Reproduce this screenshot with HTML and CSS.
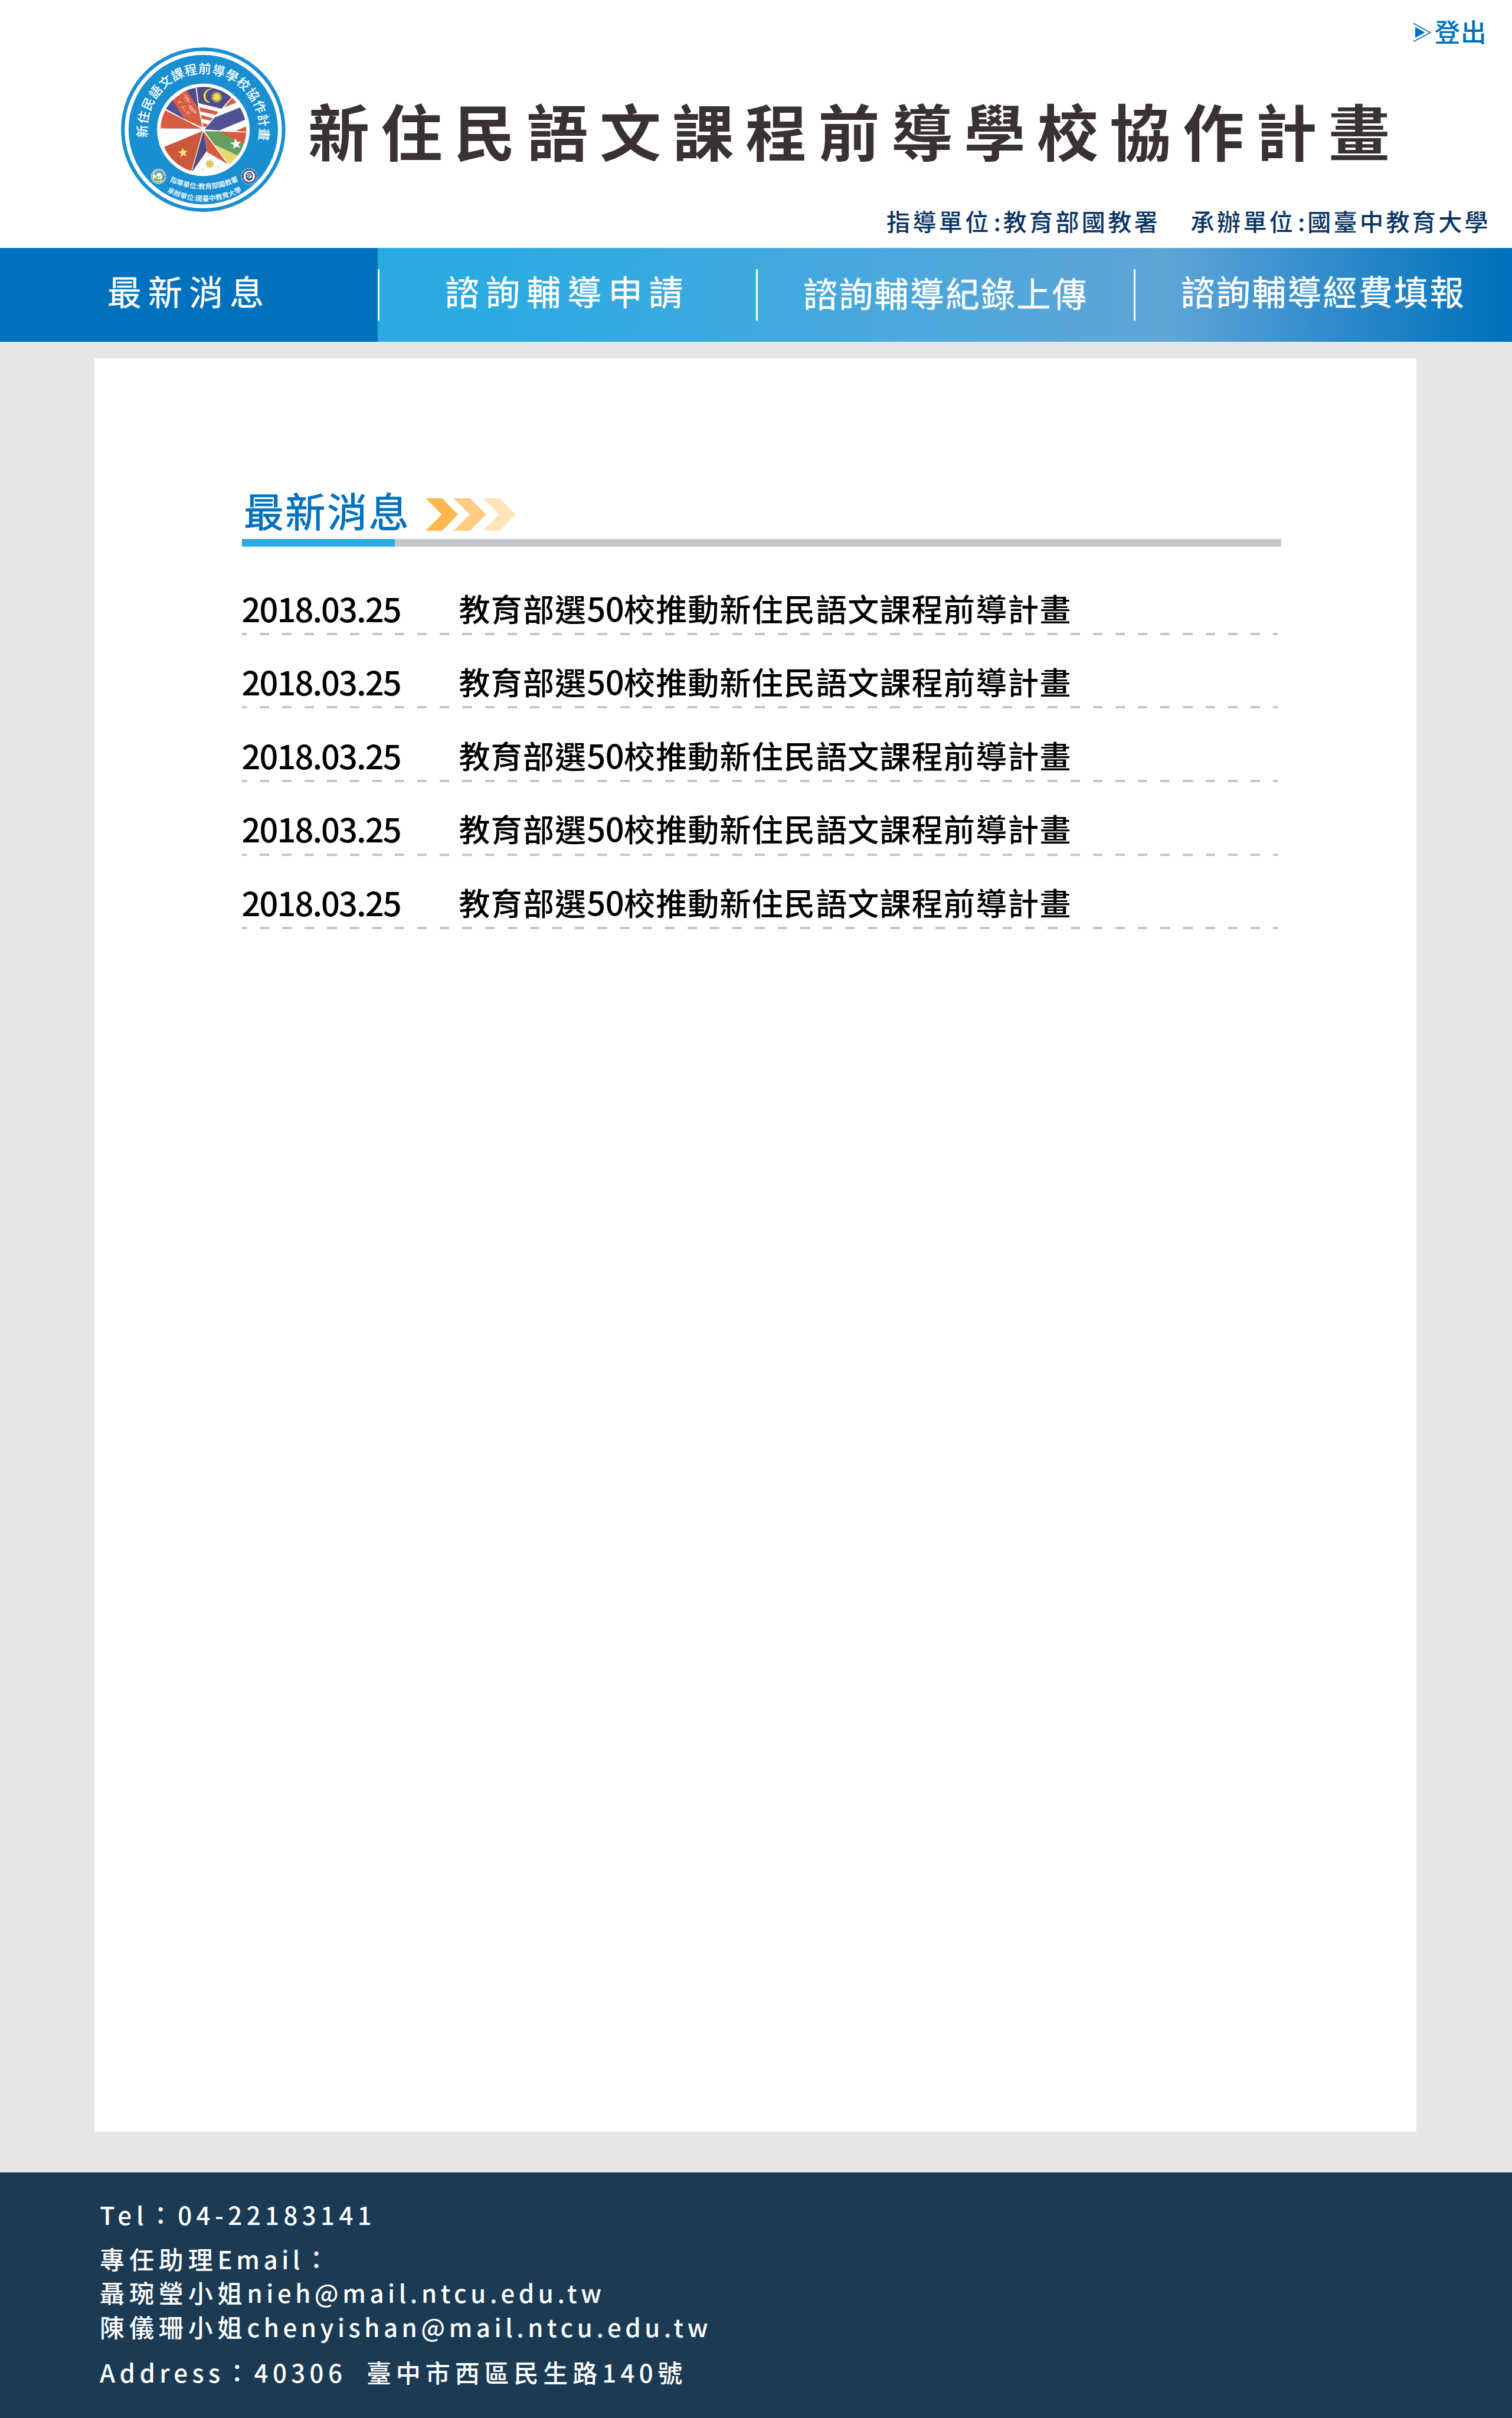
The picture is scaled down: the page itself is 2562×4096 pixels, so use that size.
FILE: index.html
```html
<!DOCTYPE html>
<html lang="zh-Hant">
<head>
<meta charset="utf-8">
<title>新住民語文課程前導學校協作計畫</title>
<link rel="stylesheet" href="styles.css">
</head>
<body>
<header class="header">
  <svg class="logo" viewBox="40 30 1115 1115" role="img" aria-label="新住民語文課程前導學校協作計畫">
    <defs>
      <path id="arc-top" d="M274 774.5A373 373 0 1 1 920 774.5"/>
      <path id="arc-guide" d="M366 925A514 514 0 0 0 838 923"/>
      <path id="arc-host" d="M348 995A511 511 0 0 0 862 990"/>
      <clipPath id="disc"><circle cx="598" cy="589" r="284"/></clipPath>
      <polygon id="star" points="0,-1 .235,-.324 .951,-.309 .38,.124 .588,.809 0,.4 -.588,.809 -.38,.124 -.951,-.309 -.235,-.324"/>
    </defs>
    <circle cx="597" cy="588" r="545" fill="#198fd2"/>
    <circle cx="597" cy="588" r="508" fill="none" stroke="#fff" stroke-width="26"/>
    <circle cx="598" cy="589" r="307" fill="#fff"/>
    <g clip-path="url(#disc)">
      <path fill="#514a86" d="M550 290L800 290V360L782 376 718 450 567 412z"/>
      <path fill="#d75c42" d="M572 439L697 470 680 491 577 467zM582 491L661 512 645 529 586 515zM591 543L630 553 614 571 597 569z"/>
      <path fill="#d75c42" d="M788 378L830 390V404L735 441z"/>
      <path fill="#505294" d="M841 441L890 430V516L705 592 605 587 673 507z"/>
      <path fill="#d75c42" d="M890 563V601L811 597z"/>
      <path fill="#d75c42" d="M702 599L890 607V697L730 617z"/>
      <path fill="#659f5f" d="M606 598L702 599 890 697V792L670 686z"/>
      <path fill="#e5da68" d="M670 686L840 770 775 830z"/>
      <path fill="#534b87" d="M597 600L605 625 622 727 520 872z"/>
      <path fill="#d75c42" d="M601 603L758 816 624 738 619 700z"/>
      <path fill="#c9593a" d="M592 597L330 706 400 880H513z"/>
      <path fill="#d75c42" d="M300 580L330 452 586 582z"/>
      <path fill="#505294" d="M340 445L385 380 397 393 475 520z"/>
      <path fill="#d75c42" d="M394 392L487 320 567 450 590 572 475 519z"/>
      <path fill="#534b87" d="M480 318L544 295 565 447z"/>
      <path fill="#f0df4c" d="M662 318C625 312 599 335 599 368C601 396 622 413 645 410C622 400 612 385 613 363C614 338 632 322 662 318z"/>
      <g stroke="#f0df4c" stroke-width="6"><circle cx="686" cy="372" r="19" fill="#f0df4c"/><path d="M686 336V408M650 372H722M661 347L711 397M711 347L661 397M672 339L700 405M700 339L672 405M653 358L719 386M719 358L653 386"/></g>
      <g fill="none" stroke="#f3b5a4" stroke-width="5"><path d="M470 350L492 396M484 358L504 402M467 378L508 386M474 394L512 408M500 423L552 478M505 433L523 472M517 425L538 474M502 450L552 462M430 398L454 410M430 414L452 402M446 440L482 432M461 436L474 466M481 468L512 482M488 486L505 466M525 468L552 480" stroke-dasharray="12 2"/></g>
    </g>
    <use href="#star" fill="#fff" transform="translate(814 683) rotate(-8) scale(38)"/>
    <use href="#star" fill="#fae67f" transform="translate(463 741) rotate(-7) scale(35)"/>
    <g stroke="#dfc566" stroke-width="9"><circle cx="640" cy="815" r="17" fill="#dfc566"/><path d="M640 785V845M610 815H670M619 794L661 836M661 794L619 836"/></g>
    <g fill="#dfc566"><use href="#star" transform="translate(628 760) scale(9)"/><use href="#star" transform="translate(694 835) scale(9)"/><use href="#star" transform="translate(594 853) scale(9)"/></g>
    <text class="seal-title"><textPath href="#arc-top" startOffset="50.7%">新住民語文課程前導學校協作計畫</textPath></text>
    <text class="seal-line"><textPath href="#arc-guide" startOffset="50%">指導單位:教育部國教署</textPath></text>
    <text class="seal-line"><textPath href="#arc-host" startOffset="50%">承辦單位:國臺中教育大學</textPath></text>
    <circle cx="301" cy="898" r="50" fill="#fff"/>
    <circle cx="301" cy="898" r="43" fill="none" stroke="#55615e" stroke-width="9" stroke-dasharray="6 5"/>
    <path fill="none" stroke="#3c9aa9" stroke-width="12" d="M277 890A27 27 0 0 1 326 880A29 29 0 0 1 320 922"/>
    <path fill="#73b84d" d="M271 907Q288 899 297 918Q320 910 316 928Q292 939 273 923zM286 890Q298 890 298 908Q284 906 286 890zM302 906Q302 894 315 894Q315 906 302 906z"/>
    <circle cx="902" cy="897" r="53" fill="#fff"/>
    <circle cx="902" cy="897" r="44" fill="none" stroke="#2d447c" stroke-width="14" stroke-dasharray="9 2"/>
    <circle cx="902" cy="893" r="21" fill="#fff" stroke="#2d447c" stroke-width="7"/>
    <path fill="none" stroke="#2d447c" stroke-width="6" d="M887 895L908 877M892 906L916 885M880 908Q898 930 925 910M892 924L917 918"/>
  </svg>
  <div class="masthead">
    <a class="logout">
      <svg class="logout-icon" viewBox="0 0 32 34"><path d="M1 1.5L29.5 17.3 1 32.5" fill="none" stroke="#0071bc" stroke-width="1.6"/><path d="M4 7.5L20.5 17 4 26z" fill="#0071bc"/></svg>
      <span>登出</span>
    </a>
    <h1 class="title">新住民語文課程前導學校協作計畫</h1>
    <p class="orgs"><span>指導單位<i class="colon">:</i>教育部國教署</span><span>承辦單位<i class="colon">:</i>國臺中教育大學</span></p>
  </div>
</header>
<nav class="nav">
  <a class="nav-item nav-item--active nav-item--wide">最新消息</a>
  <a class="nav-item nav-item--apply nav-item--wide">諮詢輔導申請</a>
  <a class="nav-item nav-item--upload">諮詢輔導紀錄上傳</a>
  <a class="nav-item nav-item--report">諮詢輔導經費填報</a>
</nav>
<main class="main">
  <section class="panel">
    <div class="section-head">
      <h2 class="section-title">最新消息</h2>
      <svg class="chevrons" viewBox="0 0 153 55"><path fill="#ffb74f" d="M0 0H28L55 27.5 28 55H0L27.500 27.500z"/><path fill="#ffcc85" d="M47.500 0H75.500L102.500 27.500 75.500 55H47.500L75 27.500z"/><path fill="#ffe3b9" d="M97.500 0H125.500L152.500 27.500 125.500 55H97.500L125 27.500z"/></svg>
    </div>
    <div class="rule"></div>
    <ul class="news">
      <li class="news-row"><time class="date">2018.03.25</time><a class="news-title">教育部選<span class="num">50</span>校推動新住民語文課程前導計畫</a></li>
      <li class="news-row"><time class="date">2018.03.25</time><a class="news-title">教育部選<span class="num">50</span>校推動新住民語文課程前導計畫</a></li>
      <li class="news-row"><time class="date">2018.03.25</time><a class="news-title">教育部選<span class="num">50</span>校推動新住民語文課程前導計畫</a></li>
      <li class="news-row"><time class="date">2018.03.25</time><a class="news-title">教育部選<span class="num">50</span>校推動新住民語文課程前導計畫</a></li>
      <li class="news-row"><time class="date">2018.03.25</time><a class="news-title">教育部選<span class="num">50</span>校推動新住民語文課程前導計畫</a></li>
    </ul>
  </section>
</main>
<footer class="footer">
  <p class="tel">Tel：<span class="digits">04-22183141</span></p>
  <p class="mail">專任助理<span class="latin">Email</span>：<br>聶琬瑩小姐<span class="latin">nieh@mail.ntcu.edu.tw</span><br>陳儀珊小姐<span class="latin">chenyishan@mail.ntcu.edu.tw</span></p>
  <p class="address"><span class="digits">Address</span>：<span class="digits">40306&nbsp; </span>臺中市西區民生路<span class="digits">140</span>號</p>
</footer>
</body>
</html>
```
FILE: styles.css
```css
* { box-sizing: border-box; margin: 0; padding: 0; }

body {
  width: 2562px;
  background: #e6e6e6;
  font-family: "Noto Sans CJK TC", "Open Sans", sans-serif;
  color: #000;
}

.header {
  display: flex;
  height: 420px;
  background: #fff;
}
.logo {
  flex: none;
  width: 285px;
  height: 285px;
  margin: 76.700px 0 0 202px;
}
.seal-title { font-size: 84px; font-weight: 500; letter-spacing: 2.500px; text-anchor: middle; fill: #fff; }
.seal-line { font-size: 46px; font-weight: 500; text-anchor: middle; fill: #fff; }

.masthead {
  flex: 1;
  display: flex;
  flex-direction: column;
  padding: 31px 0 0 35px;
}
.logout {
  display: flex;
  align-self: flex-end;
  gap: 5px;
  margin-right: 42.500px;
  color: #0071bc;
  font-size: 43.500px;
  font-weight: 500;
  line-height: 44px;
  letter-spacing: 1px;
}
.logout-icon { width: 32px; height: 34px; margin-top: 7px; }
.title {
  margin-top: 85px;
  color: #3a3232;
  font-size: 104px;
  font-weight: 700;
  line-height: 120px;
  letter-spacing: 19.500px;
  white-space: nowrap;
}
.orgs {
  display: flex;
  justify-content: flex-end;
  gap: 51.500px;
  margin: 69px 36px 0 0;
  color: #0c3564;
  font-size: 40px;
  font-weight: 500;
  line-height: 50px;
  letter-spacing: 4.400px;
}
.colon { display: inline-block; width: 20px; font-style: normal; letter-spacing: 0; text-align: center; }

.nav {
  display: grid;
  grid-template-columns: 640px 641px 640px 641px;
  height: 159px;
  background: linear-gradient(90deg, #29abe2 0 797px, #5fa5d8 1976px, #0071bc 2545px);
  color: #fff;
  font-size: 58px;
  letter-spacing: 2.270px;
  -webkit-text-stroke: 0.5px #fff;
}
.nav-item {
  display: flex;
  align-items: center;
  height: 159px;
  padding-bottom: 15px;
  background: linear-gradient(#fff, #fff) no-repeat 0 36px / 3px 87px;
  white-space: nowrap;
}
.nav-item--wide { letter-spacing: 11.100px; }
.nav-item--active { padding-left: 182px; background: #0071bc; }
.nav-item--apply { padding-left: 114px; }
.nav-item--upload { padding: 0 0 9px 80px; }
.nav-item--report { padding-left: 79.500px; }

.main { height: 3101px; padding: 28px 162.500px 0 160px; }
.panel { height: 3003.500px; padding: 206px 229px 0 250px; background: #fff; }
.section-head { display: flex; align-items: flex-start; height: 99.500px; }
.section-title {
  padding: 1px 0 0 3px;
  color: #0071bc;
  font-size: 68px;
  font-weight: 400;
  line-height: 100px;
  letter-spacing: 2.600px;
  -webkit-text-stroke: 0.900px #0071bc;
}
.chevrons { width: 153px; height: 55px; margin: 30.500px 0 0 26px; }
.rule { height: 13px; background: linear-gradient(90deg, #29abe2 0 259px, #c3c6cb 259px); }
.news { margin: 25.700px 6px 0 -0.500px; list-style: none; }
.news-row {
  display: grid;
  grid-template-columns: 368px 1fr;
  height: 124.600px;
  padding-top: 38.400px;
  background: repeating-linear-gradient(90deg, #c3c6cb 0 8px, transparent 8px 30px, #c3c6cb 30px 38.157px) no-repeat 0 100% / 100% 4px;
  font-size: 53px;
  font-weight: 500;
  line-height: 80px;
  white-space: nowrap;
}
.date { font-size: 56px; letter-spacing: -1.950px; }
.news-title { letter-spacing: 1.200px; }
.num { font-size: 56px; line-height: 1; letter-spacing: -0.600px; }

.footer {
  height: 416px;
  padding: 41.500px 0 0 169px;
  background: #1b3a54;
  color: #fff;
  font-size: 42px;
  font-weight: 500;
  line-height: 57.500px;
  letter-spacing: 7.900px;
}
.latin { letter-spacing: 6.550px; }
.digits { letter-spacing: 7.400px; }
.mail { margin-top: 17.500px; }
.address { margin-top: 19.500px; }
```
